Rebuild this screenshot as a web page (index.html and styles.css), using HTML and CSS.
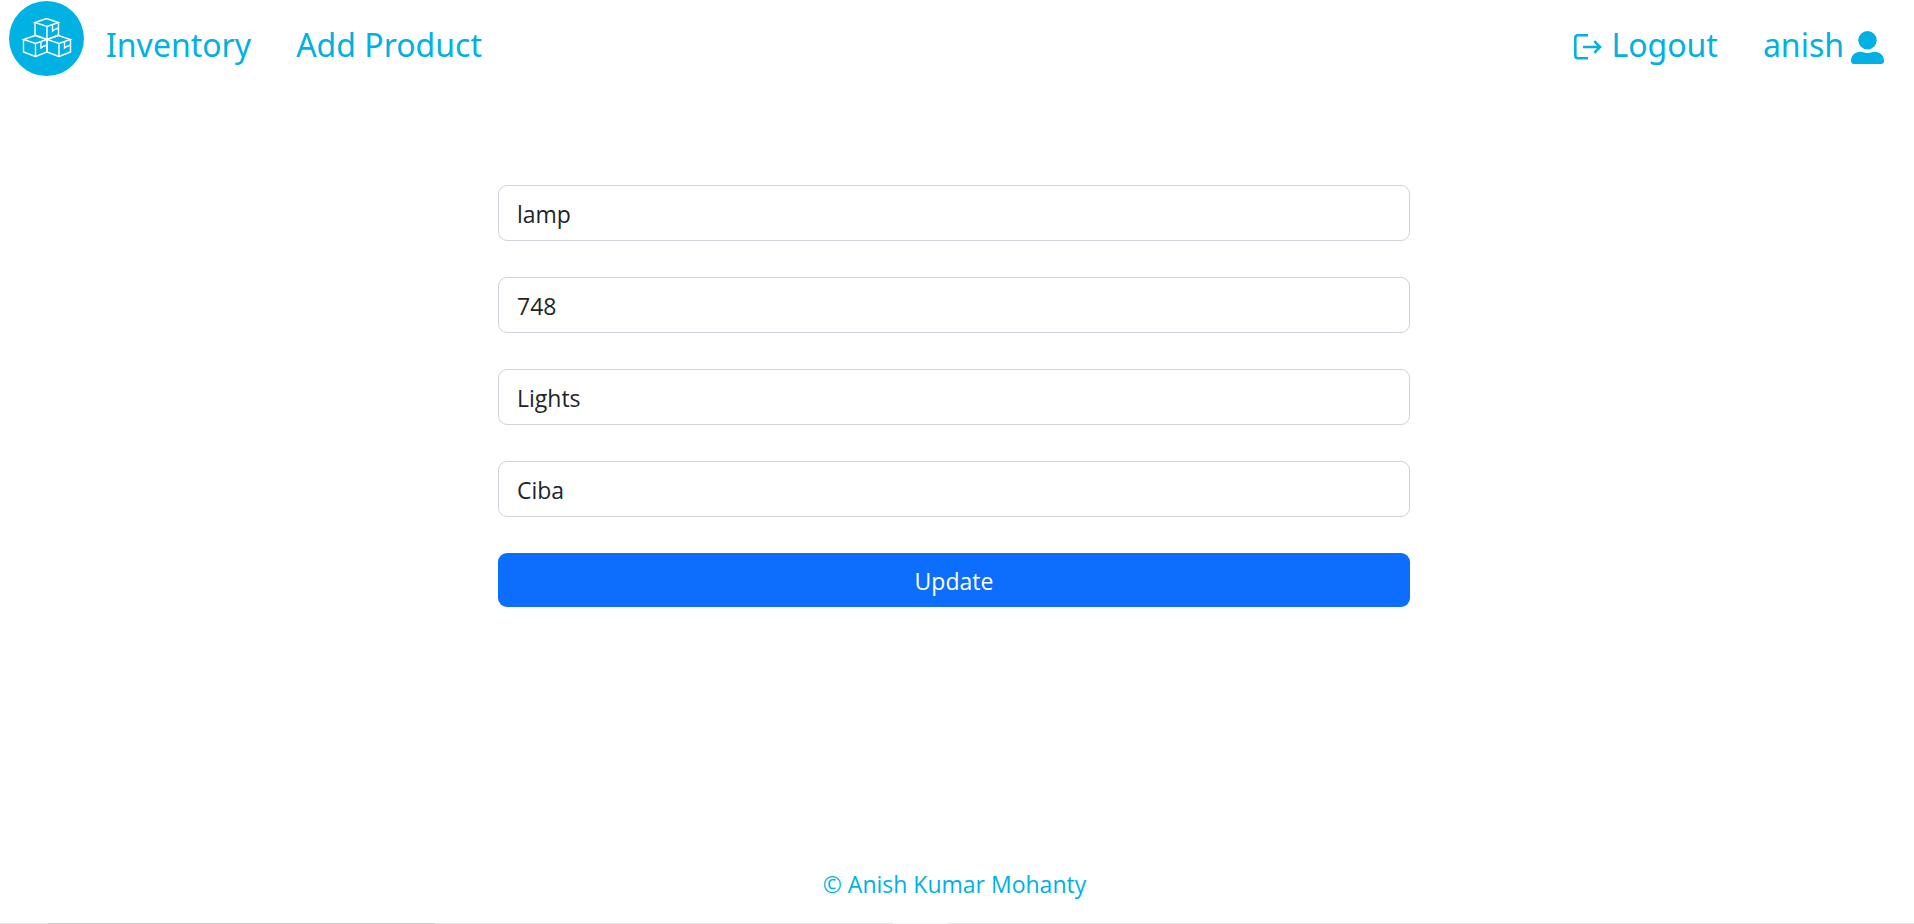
FILE: index.html
```html
<!DOCTYPE html>
<html lang="en">
<head>
<meta charset="utf-8">
<meta name="viewport" content="width=device-width, initial-scale=1">
<title>Update Product</title>
<link rel="stylesheet" href="styles.css">
</head>
<body>
<header>
  <nav class="navbar">
    <a class="brand" href="#" aria-label="Home">
      <svg class="logo" viewBox="0 0 75 75" aria-hidden="true">
        <circle cx="37.5" cy="37.5" r="37.5" fill="#00b1e3"/>
        <g fill="none" stroke="#fff" stroke-width="1.4">
          <path id="box" d="M26 21.500L37.500 17.500L49.500 21.500L38 25.500ZM26 21.500V34L38 38.500M49.500 21.500V34L38 38.500M38 25.500V38.500M43.500 23.500V30L45.500 28.500L49.500 27"/>
          <use href="#box" x="-11.500" y="17"/>
          <use href="#box" x="12" y="17"/>
        </g>
      </svg>
    </a>
    <a class="nav-link" href="#">Inventory</a>
    <a class="nav-link" href="#">Add Product</a>
    <a class="nav-link logout" href="#">
      <svg class="exit-icon" viewBox="0 0 28 26" aria-hidden="true"><path d="M14 1.300H4Q1.300 1.300 1.300 4V21.500Q1.300 24.200 4 24.200H14M9 13H26M20.300 7.200L26 13L20.300 18.800" fill="none" stroke="currentColor" stroke-width="2.600"/></svg>
      <span>Logout</span>
    </a>
    <a class="nav-link user" href="#">
      <span>anish</span>
      <svg class="user-icon" viewBox="0 0 33 33" aria-hidden="true"><circle cx="16.500" cy="9.200" r="9.200" fill="currentColor"/><path d="M9.500 20.700C12 20.700 13.500 22 16.500 22S21 20.700 23.500 20.700C29 20.700 33 24.500 33 30Q33 33 30 33H3Q0 33 0 30C0 24.500 4 20.700 9.500 20.700Z" fill="currentColor"/></svg>
    </a>
  </nav>
</header>
<main>
  <form class="product-form">
    <input class="field" type="text" aria-label="Product name" value="lamp">
    <input class="field" type="text" aria-label="Price" value="748">
    <input class="field" type="text" aria-label="Category" value="Lights">
    <input class="field" type="text" aria-label="Company" value="Ciba">
    <button class="submit" type="button">Update</button>
  </form>
</main>
<footer class="footer">
  <p class="copyright">© Anish Kumar Mohanty</p>
  <div class="edge"></div>
</footer>
</body>
</html>
```
FILE: styles.css
```css
* {
  box-sizing: border-box;
}

body {
  margin: 0;
  min-height: 100vh;
  display: flex;
  flex-direction: column;
  background: #fff;
  color: #212529;
  font-family: "Open Sans", "Noto Sans", sans-serif;
  font-size: 23px;
  line-height: 36px;
}

.navbar {
  display: flex;
  align-items: center;
  gap: 45px;
  padding: 1px 30px 0 9px;
}

.brand {
  margin-right: -23px;
}

.logo {
  display: block;
  width: 75px;
  height: 75px;
}

.nav-link {
  display: flex;
  align-items: center;
  padding-top: 12px;
  color: #00b1e3;
  font-family: "Noto Sans", sans-serif;
  font-size: 32px;
  font-weight: 400;
  line-height: 44px;
  text-decoration: none;
}

.logout {
  gap: 9px;
  margin-left: auto;
}

.user {
  gap: 7px;
}

.exit-icon,
.user-icon {
  margin-top: 5px;
}

.exit-icon {
  width: 28px;
  height: 26px;
}

.user-icon {
  width: 33px;
  height: 33px;
}

main {
  flex: 1;
  padding: 109px 6px 0 0;
}

.product-form {
  display: flex;
  flex-direction: column;
  gap: 36px;
  width: 47.8%;
  min-width: 280px;
  margin: 0 auto;
}

.field,
.submit {
  width: 100%;
  border-radius: 9px;
  font: inherit;
}

.field {
  padding: 10px 18px 8px;
  border: 1px solid #ced4da;
  background: #fff;
  color: inherit;
}

.submit {
  padding: 10px 18px 8px;
  border: 0;
  background: #0d6efd;
  color: #fff;
}

.footer {
  color: #00b1e3;
  text-align: center;
}

.copyright {
  margin: 0;
  padding: 0 5px 21px 0;
}

.edge {
  height: 1px;
  background: linear-gradient(to right, #e6e6e6 0 48px, #c8c8c8 48px 435px, #e6e6e6 435px 893px, #f7f7f7 893px 948px, #e6e6e6 948px);
}
```
